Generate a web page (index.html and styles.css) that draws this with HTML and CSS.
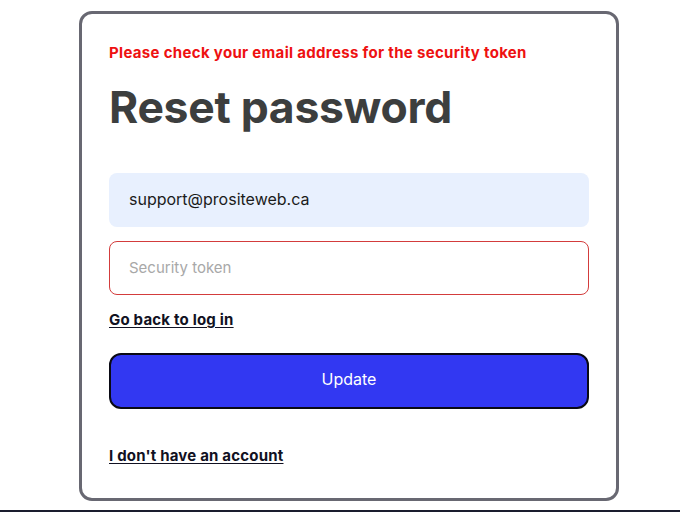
FILE: index.html
```html
<!DOCTYPE html>
<html>
<head>
<meta charset="utf-8">
<link rel="stylesheet" href="styles.css">
</head>
<body>
<main class="page">
  <form class="card">
    <p class="error">Please check your email address for the security token</p>
    <h1 class="title">Reset password</h1>
    <div class="field field-filled">support@prositeweb.ca</div>
    <div class="field field-error"><span class="placeholder">Security token</span></div>
    <a class="link link-back" href="#">Go back to log in</a>
    <button class="btn" type="button">Update</button>
    <a class="link link-account" href="#">I don't have an account</a>
  </form>
</main>
<footer class="footer"></footer>
</body>
</html>
```
FILE: styles.css
```css
* { box-sizing: border-box; }
html, body { margin: 0; padding: 0; }
body {
  width: 680px;
  height: 512px;
  overflow: hidden;
  background: #fff;
  font-family: Inter, "Noto Sans", sans-serif;
  display: flex;
  flex-direction: column;
}
.page {
  padding: 11px 0 0 79px;
  height: 510px;
}
.card {
  width: 540px;
  height: 490px;
  border: 3px solid #686872;
  border-radius: 13px;
  padding: 27px 27px 0 27px;
  display: flex;
  flex-direction: column;
  align-items: flex-start;
}
.error {
  margin: 1px 0 0 0;
  color: #ee1111;
  font-weight: 700;
  font-size: 15px;
  line-height: 22px;
  letter-spacing: 0.32px;
}
.title {
  margin: 15px 0 0 0;
  font-size: 44.5px;
  line-height: 56px;
  font-weight: 700;
  color: #3c3e3e;
  letter-spacing: -0.3px;
}
.field {
  width: 480px;
  height: 54px;
  border-radius: 8px;
  padding: 0 20px;
  display: flex;
  align-items: center;
  font-size: 16px;
}
.field-filled {
  margin-top: 38px;
  padding-bottom: 3px;
  background: #e8f0fe;
  color: #1b1b1b;
}
.field-error {
  margin-top: 14px;
  border: 1px solid #d33c3c;
  padding: 0 19px 1px 19px;
}
.placeholder {
  color: #a8a8a8;
  font-size: 15px;
}
.link {
  color: #111122;
  font-weight: 700;
  font-size: 15px;
  line-height: 20px;
  text-decoration: underline;
  text-underline-offset: 2px;
  letter-spacing: 0.2px;
}
.link-back { margin-top: 15px; }
.btn {
  margin-top: 23px;
  width: 480px;
  height: 56px;
  border: 2px solid #0a0a14;
  border-radius: 12px;
  background: #3238f2;
  color: #fff;
  font-family: inherit;
  font-size: 16px;
  padding: 0 0 5px 0;
}
.link-account { margin-top: 37px; }
.footer {
  height: 2px;
  background: #1a1d2e;
}
```
